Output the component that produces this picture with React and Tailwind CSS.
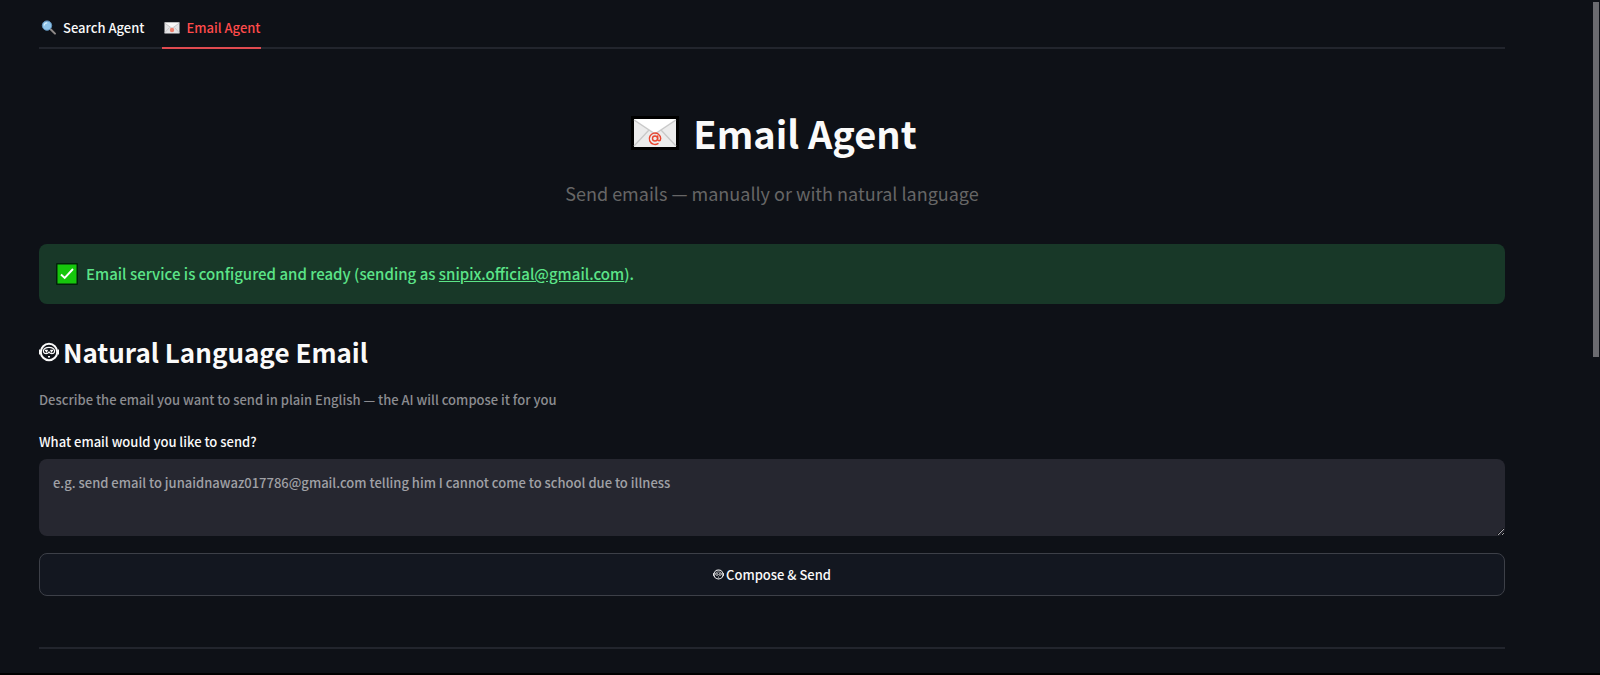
import { useState } from "react";

function SearchIcon({ className }) {
  return (
    <svg viewBox="0 0 16 16" className={className} aria-hidden="true">
      <path d="M9.6 9.2 14 13.6" stroke="#8f8a88" strokeWidth="2" strokeLinecap="round" />
      <circle cx="6" cy="5.6" r="4.7" fill="#8fc4ea" stroke="#5d8fb8" strokeWidth="1" />
      <path d="M3.2 5.2a3 3 0 0 1 2.6-2.4" stroke="#d8effc" strokeWidth="1.2" fill="none" strokeLinecap="round" />
    </svg>
  );
}

function EnvelopeIcon({ className }) {
  return (
    <svg viewBox="0 0 48 34" className={className} aria-hidden="true">
      <rect width="48" height="34" fill="#000" />
      <rect x="3" y="3" width="42" height="28" fill="#ececec" />
      <path d="M3 3h42L24 17Z" fill="#fff" />
      <path d="M3 4 24 18 45 4M3 30 18 14M45 30 30 14" stroke="#c9c9c9" strokeWidth="1.3" fill="none" />
      <circle cx="24" cy="22.5" r="2.5" fill="none" stroke="#e8452f" strokeWidth="1.4" />
      <path d="M26.7 20v3.3c0 2.200 3 2 3-.8A5.700 5.700 0 1 0 27 27.600" fill="none" stroke="#e8452f" strokeWidth="1.4" strokeLinecap="round" />
    </svg>
  );
}

function SmallEnvelopeIcon({ className }) {
  return (
    <svg viewBox="0 0 16 12" className={className} aria-hidden="true">
      <rect x="0.5" y="0.5" width="15" height="11" fill="#e4e4e6" />
      <path d="M0.5 0.5h15L8 6Z" fill="#f8f8f8" />
      <path d="M.5 1 8 6.3 15.5 1M.5 11 5.5 5.5M15.5 11l-5-5.5" stroke="#bdbdc0" strokeWidth=".7" fill="none" />
      <circle cx="8" cy="8" r="2.2" fill="#ee7f6d" />
    </svg>
  );
}

function CheckIcon({ className }) {
  return (
    <svg viewBox="0 0 22 22" className={className} aria-hidden="true">
      <rect width="22" height="22" rx="1" fill="#02210a" />
      <rect x="1.5" y="1.5" width="19" height="19" fill="#16c60c" />
      <path d="m5 11.5 3.7 3.5L17 6" fill="none" stroke="#fff" strokeWidth="1.9" />
    </svg>
  );
}

function FaceIcon({ className }) {
  return (
    <svg viewBox="0 0 20 20" className={className} fill="none" stroke="currentColor" aria-hidden="true">
      <circle cx="10" cy="10" r="8.2" strokeWidth="2" />
      <path d="M.8 7.5v5M19.2 7.5v5" strokeWidth="1.6" />
      <path d="M4.500 10V8.500C5.500 4.300 14.500 4.300 15.500 8.500V10c-.8 2.200-4.200 2.200-5.500 0-1.300 2.200-4.700 2.200-5.500 0Z" strokeWidth="1.2" />
      <path d="M6 8.500h2.800M11.200 8.500H14M7.500 8.500v2M12.500 8.500v2" strokeWidth="1.300" />
      <path d="M9 14.700h2" strokeWidth="1.500" />
    </svg>
  );
}

const tabs = [
  { id: "search", label: "Search Agent", icon: <SearchIcon className="size-4" /> },
  { id: "email", label: "Email Agent", icon: <SmallEnvelopeIcon className="h-3 w-4" /> },
];

export default function App() {
  const [active, setActive] = useState("email");
  return (
    <div className="relative min-h-screen overflow-hidden border-b-2 border-black bg-[#0e1117] font-['Noto_Sans_CJK_SC',sans-serif] text-[13px] font-medium text-[#fafafa]">
      <main className="pr-[95px] pl-[39px]">
        <div role="tablist" className="flex gap-[18px] border-b-2 border-[#22252d]">
          {tabs.map((tab) => (
            <button
              key={tab.id}
              type="button"
              role="tab"
              aria-selected={active === tab.id}
              onClick={() => setActive(tab.id)}
              className={
                active === tab.id
                  ? "-mb-0.5 flex h-[49px] items-center gap-1.5 border-b-2 border-[#e04a50] pt-2 pl-0.5 text-[#ff4b4b]"
                  : "-mb-0.5 flex h-[49px] items-center gap-1.5 border-b-2 border-transparent pt-2 pl-0.5"
              }
            >
              {tab.icon}
              {tab.label}
            </button>
          ))}
        </div>

        <header className="flex flex-col items-center pt-[54px]">
          <h1 className="flex items-center gap-3.5 pl-1 text-[38px] leading-[60px] font-bold">
            <EnvelopeIcon className="h-[34px] w-12" />
            Email Agent
          </h1>
          <p className="mt-3.5 text-lg leading-8 font-normal text-[#666666]">
            Send emails — manually or with natural language
          </p>
        </header>

        <div role="status" className="mt-[35px] flex h-[60px] items-center gap-2 rounded-lg bg-[#183828] px-[17px] text-[15px] text-[#5ce488]">
          <CheckIcon className="size-[22px]" />
          <p>
            Email service is configured and ready (sending as{" "}
            <a href="mailto:snipix.official@gmail.com" className="underline">
              snipix.official@gmail.com
            </a>
            ).
          </p>
        </div>

        <h2 className="mt-7 flex items-center gap-1 text-[26px] leading-10 font-bold">
          <FaceIcon className="size-5" />
          Natural Language Email
        </h2>
        <p className="mt-4 leading-6 text-[#8b8c90]">
          Describe the email you want to send in plain English — the AI will compose it for you
        </p>
        <label htmlFor="prompt" className="mt-[18px] block leading-6">
          What email would you like to send?
        </label>
        <textarea
          id="prompt"
          placeholder="e.g. send email to junaidnawaz017786@gmail.com telling him I cannot come to school due to illness"
          className="mt-[5px] block h-[77px] w-full resize-y rounded-lg bg-[#262730] px-3.5 py-3 leading-6 placeholder:text-[#a0a1a6] focus:outline-none"
        />
        <button
          type="button"
          className="mt-[17px] flex h-[43px] w-full items-center justify-center gap-0.5 rounded-lg border border-[#3d4048] bg-[#131720]"
        >
          <FaceIcon className="size-[11px]" />
          Compose &amp; Send
        </button>
        <hr className="mt-[51px] border-t-2 border-[#22252d]" />
      </main>
      <div className="absolute top-0.5 right-px h-[355px] w-1.5 bg-[#6b6b70]" />
    </div>
  );
}
